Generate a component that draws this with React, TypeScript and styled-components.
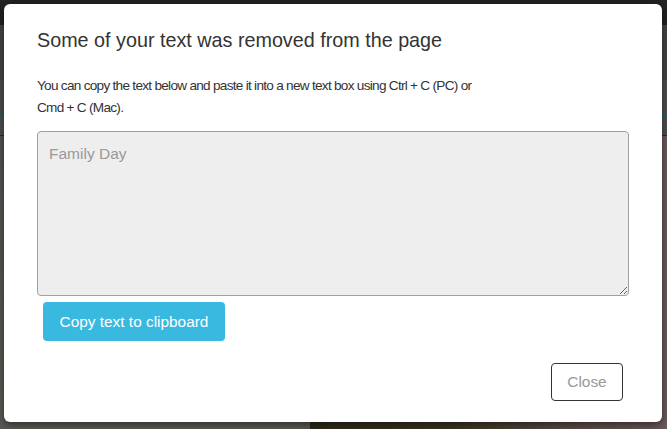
import React from "react";
import styled, { createGlobalStyle } from "styled-components";

const GlobalStyle = createGlobalStyle`
    html, body {
        margin: 0;
        padding: 0;
        background: #55554f;
    }
    * {
        box-sizing: border-box;
    }
`;

const Page = styled.div`
    position: relative;
    width: 667px;
    height: 429px;
    overflow: hidden;
    display: flex;
    flex-direction: column;
    font-family: "Liberation Sans", Arial, sans-serif;
`;

const NavBar = styled.div`
    height: 25px;
    background-color: #222222;
`;

const SubBar = styled.div`
    height: 55px;
    background-color: #454545;
`;

const Strip = styled.div`
    height: 37px;
    background-color: #4d4d4d;
    border-bottom: 1px solid #1f6577;
`;

const Tabs = styled.div`
    height: 19px;
    background-color: #4f4f4f;
    border-bottom: 1px solid #2b2b2b;
`;

const Content = styled.div`
    flex: 1;
    display: flex;
    background: linear-gradient(180deg, #535350 0%, #5b5b55 100%);
`;

const ContentLeft = styled.div`
    width: 310px;
`;

const Photo = styled.div`
    flex: 1;
    background: linear-gradient(90deg, #2f2b18 0%, #3b3520 40%, #5a4a44 70%, #6b5a5c 100%);
`;

const Modal = styled.div`
    position: absolute;
    top: 4px;
    left: 4px;
    width: 658px;
    height: 418px;
    background-color: #ffffff;
    border-radius: 6px;
    box-shadow: 0 3px 9px rgba(0, 0, 0, 0.5);
    display: flex;
    flex-direction: column;
    padding: 25px 33px 21px 33px;
    color: #333333;
`;

const Title = styled.h4`
    margin: 0;
    font-size: 19.75px;
    font-weight: normal;
    line-height: 22px;
`;

const Message = styled.p`
    margin: 24px 0 12px 0;
    max-width: 460px;
    font-size: 13.6px;
    letter-spacing: -0.72px;
    line-height: 22px;
`;

const TextBox = styled.textarea`
    display: block;
    width: 592px;
    height: 165px;
    margin: 0;
    padding: 12px 11px;
    background-color: #eeeeee;
    border: 1px solid #a0a0a0;
    border-radius: 4px;
    color: #999999;
    font-family: "Liberation Sans", Arial, sans-serif;
    font-size: 15.5px;
    line-height: 20px;
    resize: both;
    outline: none;
`;

interface ButtonProps {
    $variant: "primary" | "outline";
}

const Button = styled.button<ButtonProps>`
    font-family: "Liberation Sans", Arial, sans-serif;
    font-size: 15.4px;
    border-radius: 4px;
    cursor: pointer;
    padding: 0;
    background-color: ${(p) => (p.$variant === "primary" ? "#39b9e0" : "#ffffff")};
    color: ${(p) => (p.$variant === "primary" ? "#ffffff" : "#999999")};
    border: ${(p) => (p.$variant === "primary" ? "none" : "1px solid #333333")};
`;

const CopyButton = styled(Button)`
    width: 182px;
    height: 39px;
    margin: 6px 0 0 6px;
    align-self: flex-start;
`;

const Footer = styled.div`
    margin-top: auto;
    display: flex;
    justify-content: flex-end;
    padding-right: 6px;
`;

const CloseButton = styled(Button)`
    width: 72px;
    height: 38px;
`;

const App: React.FC = () => {
    return (
        <Page>
            <GlobalStyle />
            <NavBar />
            <SubBar />
            <Strip />
            <Tabs />
            <Content>
                <ContentLeft />
                <Photo />
            </Content>
            <Modal role="dialog">
                <Title>Some of your text was removed from the page</Title>
                <Message>
                    You can copy the text below and paste it into a new text box using Ctrl + C (PC) or Cmd + C
                    (Mac).
                </Message>
                <TextBox readOnly defaultValue="Family Day" />
                <CopyButton $variant="primary">Copy text to clipboard</CopyButton>
                <Footer>
                    <CloseButton $variant="outline">Close</CloseButton>
                </Footer>
            </Modal>
        </Page>
    );
};

export default App;
